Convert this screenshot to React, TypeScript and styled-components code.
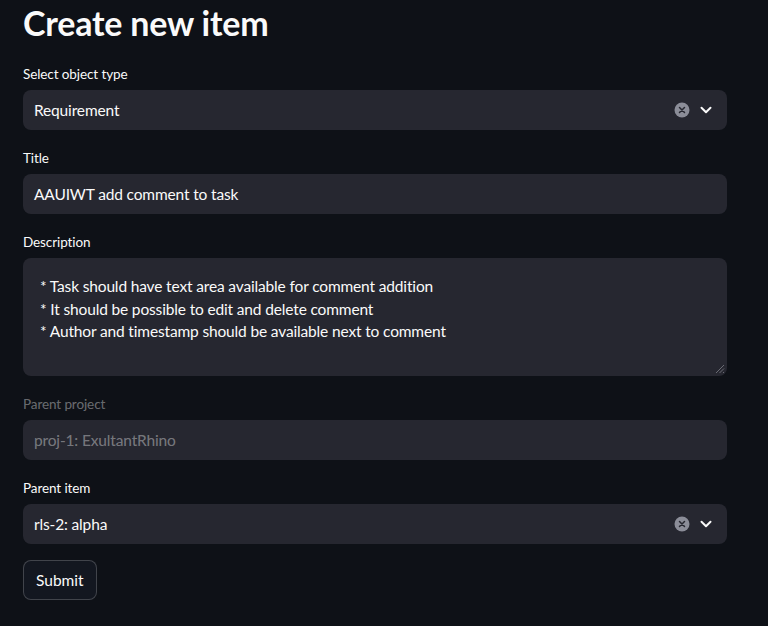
import styled, { createGlobalStyle } from 'styled-components';

const GlobalStyle = createGlobalStyle`
    html, body {
        margin: 0;
        padding: 0;
        background: #0e1117;
    }
    body {
        font-family: Lato, 'Noto Sans', sans-serif;
        color: #fafafa;
    }
`;

const Page = styled.div`
    width: 704px;
    padding: 0 41px 0 23px;
    display: flex;
    flex-direction: column;
    gap: 16px;
`;

const Heading = styled.h1`
    margin: 0;
    padding: 4px 0 4px;
    font-size: 34px;
    font-weight: 700;
    line-height: 38px;
    letter-spacing: -0.2px;
    height: 38px;
`;

const Field = styled.div`
    display: flex;
    flex-direction: column;
`;

const Label = styled.label<{ $disabled?: boolean }>`
    font-size: 13.5px;
    letter-spacing: -0.1px;
    line-height: 24px;
    min-height: 24px;
    margin-bottom: 4px;
    color: ${(p) => (p.$disabled ? 'rgba(250, 250, 250, 0.4)' : '#fafafa')};
`;

const Box = styled.div<{ $disabled?: boolean }>`
    height: 40px;
    box-sizing: border-box;
    background: #262730;
    border-radius: 8px;
    display: flex;
    align-items: center;
    padding: 0 11px;
    font-size: 15.5px;
    letter-spacing: -0.15px;
    color: ${(p) => (p.$disabled ? 'rgba(250, 250, 250, 0.4)' : '#fafafa')};
`;

const Value = styled.span`
    flex: 1;
`;

const Icons = styled.div`
    display: flex;
    align-items: center;
    gap: 9px;
    margin-right: 3px;
`;

const TextArea = styled.div`
    position: relative;
    height: 118px;
    box-sizing: border-box;
    background: #262730;
    border-radius: 8px;
    padding: 17px 17px;
    font-size: 15.5px;
    letter-spacing: -0.15px;
    line-height: 22.5px;
`;

const Grip = styled.svg`
    position: absolute;
    right: 2px;
    bottom: 2px;
`;

const Button = styled.button`
    align-self: flex-start;
    height: 40px;
    padding: 0 12px;
    border-radius: 8px;
    border: 1px solid rgba(250, 250, 250, 0.2);
    background: #131720;
    color: #fafafa;
    font-family: inherit;
    font-size: 15.5px;
`;

const ClearIcon = () => (
    <svg width='16' height='16' viewBox='0 0 16 16'>
        <circle cx='8' cy='8' r='7.5' fill='#8b8d98' />
        <path d='M5.5 5.5l5 5M10.5 5.5l-5 5' stroke='#262730' strokeWidth='1.5' strokeLinecap='round' />
    </svg>
);

const Chevron = () => (
    <svg width='14' height='14' viewBox='0 0 14 14'>
        <path d='M2.5 4.8L7 9.2l4.5-4.4' stroke='#fafafa' strokeWidth='2' fill='none' strokeLinecap='round' strokeLinejoin='round' />
    </svg>
);

const Select = ({ value }: { value: string }) => (
    <Box>
        <Value>{value}</Value>
        <Icons>
            <ClearIcon />
            <Chevron />
        </Icons>
    </Box>
);

const App = () => {
    const lines = [
        '* Task should have text area available for comment addition',
        '* It should be possible to edit and delete comment',
        '* Author and timestamp should be available next to comment',
    ];

    return (
        <>
            <GlobalStyle />
            <Page>
                <Heading>Create new item</Heading>
                <Field>
                    <Label>Select object type</Label>
                    <Select value='Requirement' />
                </Field>
                <Field>
                    <Label>Title</Label>
                    <Box>AAUIWT add comment to task</Box>
                </Field>
                <Field>
                    <Label>Description</Label>
                    <TextArea>
                        {lines.map((line) => (
                            <div key={line}>{line}</div>
                        ))}
                        <Grip width='12' height='12' viewBox='0 0 12 12'>
                            <path d='M11 3L3 11M11 6.5L6.5 11M11 10L10 11' stroke='#6b6c75' strokeWidth='1' />
                        </Grip>
                    </TextArea>
                </Field>
                <Field>
                    <Label $disabled>Parent project</Label>
                    <Box $disabled>proj-1: ExultantRhino</Box>
                </Field>
                <Field>
                    <Label>Parent item</Label>
                    <Select value='rls-2: alpha' />
                </Field>
                <Button>Submit</Button>
            </Page>
        </>
    );
};

export default App;
